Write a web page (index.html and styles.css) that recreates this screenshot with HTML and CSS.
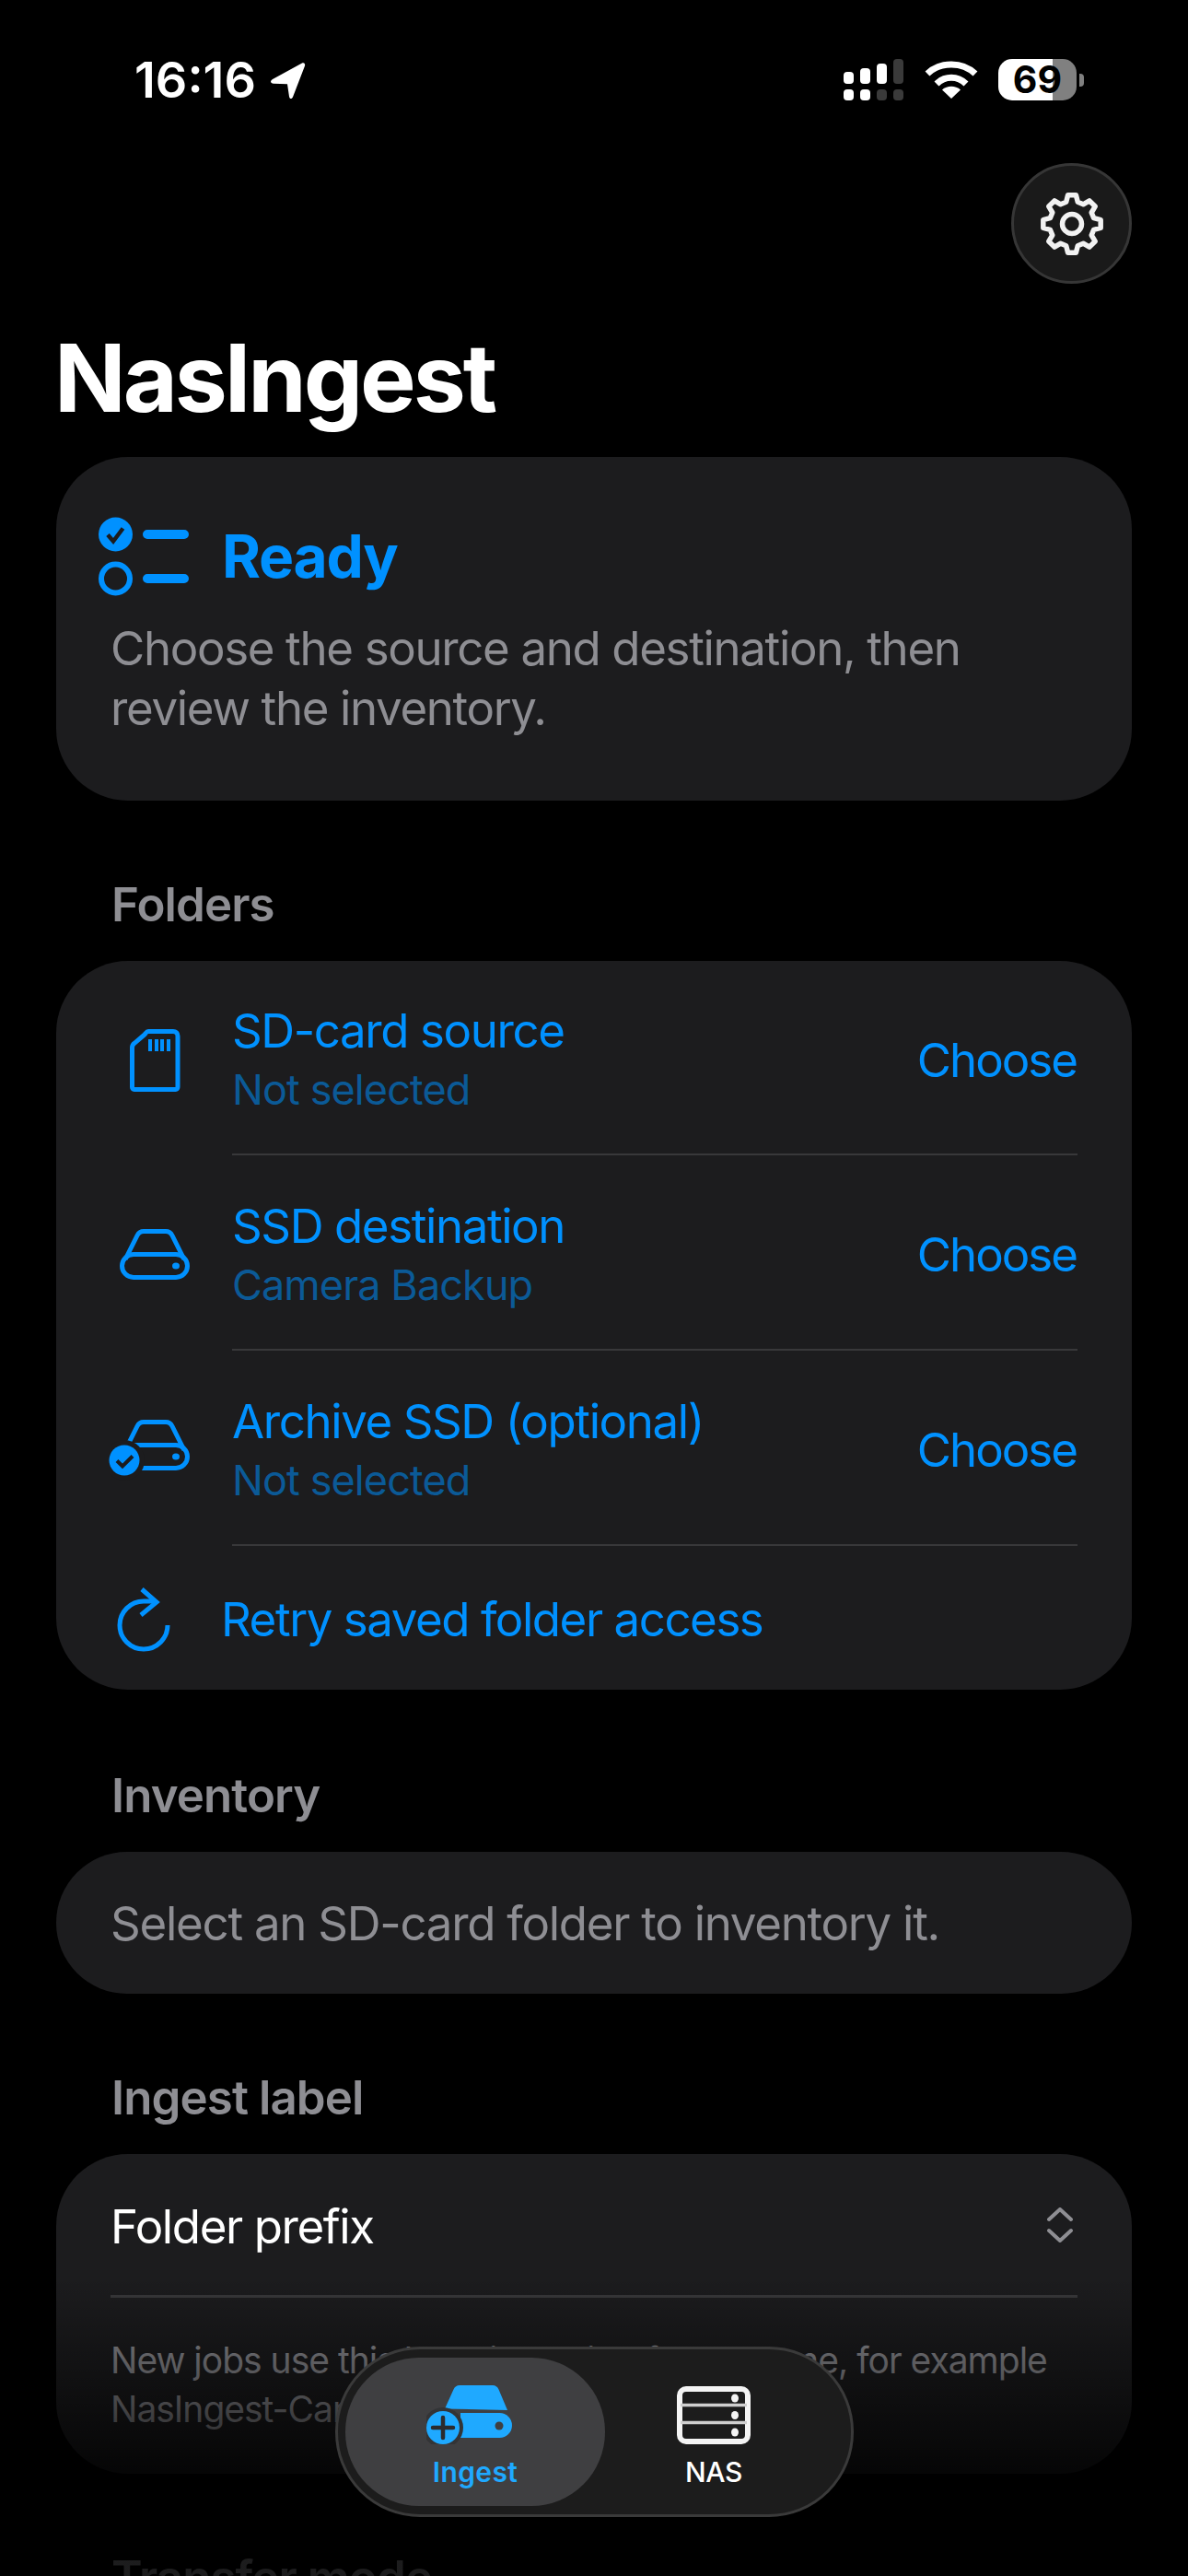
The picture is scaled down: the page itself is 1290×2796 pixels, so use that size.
FILE: index.html
```html
<!DOCTYPE html>
<html lang="en">
<head>
  <meta charset="UTF-8">
  <meta name="viewport" content="width=device-width, initial-scale=1">
  <title>NasIngest</title>
  <link rel="stylesheet" href="styles.css">
</head>
<body>
<div class="screen">

  <div class="status">
    <div class="status-left">
      <span class="clock">16:16</span>
      <svg class="loc" width="42" height="42" viewBox="0 0 42 42"><path d="M37 2.500 5 20c-3 1.700-2.500 4.500 1 4.700l15 .6 2 13.400c.5 3 3 3 4 .5L40 5.500c.8-2.300-1-4-3-3Z" fill="#fff"/></svg>
    </div>
    <div class="status-right">
      <svg width="65" height="45" viewBox="0 0 65 45">
        <rect x="0" y="14" width="11" height="13" rx="4" fill="#fff"/>
        <rect x="18" y="10" width="11" height="17" rx="4" fill="#fff"/>
        <rect x="36" y="5" width="11" height="22" rx="4" fill="#fff"/>
        <rect x="54" y="0" width="11" height="27" rx="4" fill="#3a3a3a"/>
        <rect x="0" y="33" width="11" height="12" rx="4" fill="#fff"/>
        <rect x="18" y="33" width="11" height="12" rx="4" fill="#fff"/>
        <rect x="36" y="33" width="11" height="12" rx="4" fill="#3a3a3a"/>
        <rect x="54" y="33" width="11" height="12" rx="4" fill="#3a3a3a"/>
      </svg>
      <svg class="wifi" width="58" height="43" viewBox="0 0 58 43" fill="none" stroke="#fff">
        <path d="M3 15C17 1.500 41 1.500 55 15" stroke-width="7"/>
        <path d="M13 26c9-9 23-9 32 0" stroke-width="7"/>
        <path d="M29 42 19 32.500c5.500-5 14.500-5 20 0Z" fill="#fff" stroke="none"/>
      </svg>
      <div class="battery"><div class="battery-cell">69</div><div class="battery-nub"></div></div>
    </div>
  </div>

  <div class="top-actions">
    <button class="gear-btn">
      <svg width="80" height="80" viewBox="0 0 80 80" fill="none" stroke="#f2f2f2" stroke-width="5.500" stroke-linejoin="round">
        <polygon points="63.67,33.66 71.19,35.62 71.19,44.38 63.67,46.34 61.22,52.25 65.16,58.96 58.96,65.16 52.25,61.22 46.34,63.67 44.38,71.19 35.62,71.19 33.66,63.67 27.75,61.22 21.04,65.16 14.84,58.96 18.78,52.25 16.33,46.34 8.81,44.38 8.81,35.62 16.33,33.66 18.78,27.75 14.84,21.04 21.04,14.84 27.75,18.78 33.66,16.33 35.62,8.81 44.38,8.81 46.34,16.33 52.25,18.78 58.96,14.84 65.16,21.04 61.22,27.75"/>
        <circle cx="40" cy="40" r="10.500"/>
      </svg>
    </button>
  </div>

  <h1 class="title">NasIngest</h1>

  <section class="card status-card">
    <div class="status-head">
      <svg width="98" height="86" viewBox="0 0 98 86">
        <circle cx="18.500" cy="19" r="18.500" fill="#0091ff"/>
        <path d="M10 19.500l6 7 10.500-14" fill="none" stroke="#1c1c1e" stroke-width="4.500"/>
        <circle cx="18.500" cy="67" r="15.500" fill="none" stroke="#0091ff" stroke-width="6"/>
        <path d="M53 19h40M53 67h40" stroke="#0091ff" stroke-width="10" stroke-linecap="round"/>
      </svg>
      <span class="status-title">Ready</span>
    </div>
    <p class="status-desc">Choose the source and destination, then review the inventory.</p>
  </section>

  <h2 class="section-label">Folders</h2>
  <section class="card folders">
    <div class="row">
      <svg class="row-icon" width="90" height="90" viewBox="0 0 90 90" fill="none" stroke="#0091ff" stroke-width="5">
        <path d="M25.500 33c0-2 .8-3.500 2.500-4.700l11-9.500c1-1 2.300-3.300 4-3.300h27c3 0 5 2 5 5v55c0 3-2 3-5 3H30.500c-3 0-5 0-5-3Z"/>
        <path d="M45 24v13M52 24v13M58 24v13M65 24v13" stroke-width="4"/>
      </svg>
      <div class="row-body">
        <div class="row-text">
          <div class="row-title">SD-card source</div>
          <div class="row-sub">Not selected</div>
        </div>
        <span class="choose">Choose</span>
      </div>
    </div>
    <div class="row">
      <svg class="row-icon" width="90" height="90" viewBox="0 0 90 90" fill="none" stroke="#0091ff" stroke-width="5">
        <rect x="14.500" y="46.500" width="71" height="25" rx="12.500"/>
        <path d="M18 52 31 26c1.500-3 3.500-4.500 7-4.500h24c3.500 0 5.500 1.500 7 4.500l13 26"/>
        <ellipse cx="73" cy="59" rx="4" ry="3.500" fill="#0091ff" stroke="none"/>
      </svg>
      <div class="row-body">
        <div class="row-text">
          <div class="row-title">SSD destination</div>
          <div class="row-sub">Camera Backup</div>
        </div>
        <span class="choose">Choose</span>
      </div>
    </div>
    <div class="row">
      <svg class="row-icon" width="90" height="90" viewBox="0 0 90 90" fill="none" stroke="#0091ff" stroke-width="5">
        <g transform="translate(0 -5)">
          <rect x="14.500" y="46.500" width="71" height="25" rx="12.500"/>
          <path d="M18 52 31 26c1.500-3 3.500-4.500 7-4.500h24c3.500 0 5.500 1.500 7 4.500l13 26"/>
          <ellipse cx="73" cy="59" rx="4" ry="3.500" fill="#0091ff" stroke="none"/>
        </g>
        <circle cx="17" cy="58" r="22" fill="#1c1c1e" stroke="none"/>
        <circle cx="17" cy="58" r="16.500" fill="#0091ff" stroke="none"/>
        <path d="M9 58.500l6 6 11-11" stroke="#1c1c1e" stroke-width="4"/>
      </svg>
      <div class="row-body">
        <div class="row-text">
          <div class="row-title">Archive SSD (optional)</div>
          <div class="row-sub">Not selected</div>
        </div>
        <span class="choose">Choose</span>
      </div>
    </div>
    <div class="retry-row">
      <svg class="retry-icon" width="90" height="90" viewBox="0 0 90 90" fill="none" stroke="#0091ff" stroke-width="5">
        <path d="M50 27H38A26 26 0 1 0 64 53"/>
        <path d="M36 14l16 14-17 14"/>
      </svg>
      <span class="retry-text">Retry saved folder access</span>
    </div>
  </section>

  <h2 class="section-label inventory-label">Inventory</h2>
  <section class="card inventory">Select an SD-card folder to inventory it.</section>

  <h2 class="section-label">Ingest label</h2>
  <section class="card ingest">
    <div class="picker-row">
      <span class="picker-name">Folder prefix</span>
      <svg width="28" height="38" viewBox="0 0 28 38" fill="none" stroke="#8e8e93" stroke-width="4" stroke-linecap="round" stroke-linejoin="round">
        <path d="M2 13 14 2l12 11M2 25l12 11 12-11"/>
      </svg>
    </div>
    <p class="help">New jobs use this label in the job folder name, for example NasIngest-Camera</p>
  </section>

  <h2 class="section-label">Transfer mode</h2>

  <div class="fade"></div>

  <nav class="tabbar">
    <div class="tab tab-active">
      <svg class="tab-icon" width="93" height="65" viewBox="0 0 93 65">
        <path d="M20 26.500 29.500 5.500c1.300-3 3.500-4.500 6.500-4.500h36c3 0 5.200 1.500 6.500 4.500L88 28Z" fill="#1fa9ff"/>
        <path d="M37 31h42.500a13.500 13.500 0 0 1 0 27H37Z" fill="#1fa9ff"/>
        <circle cx="79" cy="45" r="4.500" fill="#3f3f41"/>
        <circle cx="18" cy="47" r="22" fill="#333436"/>
        <circle cx="18" cy="47" r="18" fill="#1fa9ff"/>
        <path d="M18 36v22M7 47h22" stroke="#2b2b2d" stroke-width="4.500" stroke-linecap="round"/>
      </svg>
      <span class="tab-label">Ingest</span>
    </div>
    <div class="tab tab-plain">
      <svg width="80" height="63" viewBox="0 0 80 63" fill="none" stroke="#f4f4f4">
        <rect x="3" y="3" width="74" height="57" rx="7" stroke-width="6"/>
        <path d="M4 20.500h72M4 39.500h72" stroke="#cfcfcf" stroke-width="3.500"/>
        <ellipse cx="63" cy="13" rx="4" ry="4.500" fill="#f4f4f4" stroke="none"/>
        <ellipse cx="63" cy="31.500" rx="4" ry="4.500" fill="#f4f4f4" stroke="none"/>
        <ellipse cx="63" cy="50" rx="4" ry="4.500" fill="#f4f4f4" stroke="none"/>
      </svg>
      <span class="tab-label">NAS</span>
    </div>
  </nav>

</div>
</body>
</html>
```

FILE: styles.css
```css
* {
  box-sizing: border-box;
}

body {
  margin: 0;
  background: #000;
  color: #fff;
  font-family: "Inter", "Liberation Sans", sans-serif;
}

.screen {
  position: relative;
  height: 2796px;
  padding-top: 64px;
  overflow: hidden;
  background: #000;
}

/* status bar */
.status {
  display: flex;
  justify-content: space-between;
  align-items: center;
  height: 45px;
  padding: 0 113px 0 146px;
}

.status-left {
  display: flex;
  align-items: center;
  gap: 13px;
}

.clock {
  font-size: 54px;
  font-weight: 600;
  line-height: 45px;
}

.status-right {
  display: flex;
  align-items: center;
  gap: 23px;
}

.wifi {
  margin-right: -1px;
}

.battery {
  display: flex;
  align-items: center;
  gap: 3px;
}

.battery-cell {
  width: 85px;
  height: 45px;
  border-radius: 15px;
  background: linear-gradient(90deg, #fff 69%, #808080 69%);
  color: #000;
  font-size: 41px;
  font-weight: 700;
  line-height: 45px;
  text-align: center;
}

.battery-nub {
  width: 5px;
  height: 14px;
  border-radius: 0 4px 4px 0;
  background: #808080;
}

/* header */
.top-actions {
  display: flex;
  justify-content: flex-end;
  padding: 0 61px;
  margin-top: 68px;
}

.gear-btn {
  display: flex;
  align-items: center;
  justify-content: center;
  width: 131px;
  height: 131px;
  padding: 0;
  border: 3px solid #363636;
  border-radius: 50%;
  background: #1a1a1a;
}

.title {
  margin: 47px 59px 31px;
  font-size: 102px;
  font-weight: 700;
  line-height: 110px;
  letter-spacing: -3.100px;
}

/* cards */
.card {
  margin: 0 61px;
  background: #1c1c1e;
  border-radius: 78px;
}

.status-card {
  padding: 65px 46px 68px;
}

.status-head {
  display: flex;
  align-items: center;
  gap: 36px;
  margin-bottom: 24px;
}

.status-title {
  color: #0091ff;
  font-size: 64px;
  font-weight: 700;
  line-height: 76px;
  letter-spacing: -1.200px;
}

.status-desc {
  margin: 0;
  padding-left: 13px;
  color: #8e8e93;
  font-size: 51px;
  line-height: 65px;
  letter-spacing: -1.350px;
}

.section-label {
  margin: 83px 121px 31px;
  color: #8e8e93;
  font-size: 51px;
  font-weight: 600;
  line-height: 60px;
  letter-spacing: -0.900px;
}

.inventory-label {
  margin-top: 85px;
}

/* folder rows */
.row {
  display: flex;
  align-items: center;
  height: 212px;
}

.row:first-child {
  height: 211px;
}

.row-icon {
  flex: none;
  margin: 0 44px 0 57px;
}

.row-body {
  flex: 1;
  display: flex;
  align-items: center;
  justify-content: space-between;
  height: 100%;
  margin-right: 59px;
  padding: 5px 1px 0 0;
  border-bottom: 2px solid #38383a;
}

.row-title {
  color: #0091ff;
  font-size: 51px;
  line-height: 62px;
  letter-spacing: -1.400px;
}

.row-sub {
  margin-top: 4px;
  color: #0b5a97;
  font-size: 45px;
  line-height: 58px;
  letter-spacing: -0.900px;
}

.choose {
  color: #0091ff;
  font-size: 51px;
  letter-spacing: -2px;
}

.retry-row {
  display: flex;
  align-items: center;
  height: 156px;
}

.retry-icon {
  flex: none;
  margin: 0 32px 0 57px;
}

.retry-text {
  padding-top: 3px;
  color: #0091ff;
  font-size: 51px;
  line-height: 62px;
  letter-spacing: -1.450px;
}

.inventory {
  display: flex;
  align-items: center;
  height: 154px;
  padding: 0 59px;
  color: #8e8e93;
  font-size: 51px;
  letter-spacing: -1.260px;
}

/* ingest label */
.ingest {
  padding: 0 59px 44px;
}

.picker-row {
  display: flex;
  align-items: center;
  justify-content: space-between;
  height: 156px;
  padding-right: 5px;
  border-bottom: 3px solid #38383a;
}

.picker-name {
  padding-top: 4px;
  font-size: 51px;
  line-height: 62px;
  letter-spacing: -1.400px;
}

.help {
  margin: 41px 0 0;
  color: #8e8e93;
  font-size: 39px;
  line-height: 53px;
  letter-spacing: -1px;
}

/* overlays */
.fade {
  position: absolute;
  left: 0;
  right: 0;
  top: 2472px;
  bottom: 0;
  background: linear-gradient(180deg, rgba(0, 0, 0, 0) 0, rgba(0, 0, 0, 0.8) 212px, rgba(0, 0, 0, 0.8) 100%);
}

.tabbar {
  position: absolute;
  left: 364px;
  top: 2547px;
  display: flex;
  align-items: center;
  width: 563px;
  height: 185px;
  padding: 0 8px;
  border: 3px solid #3a3a3a;
  border-radius: 92px;
  background: #1c1c1c;
}

.tab {
  flex: none;
  display: flex;
  flex-direction: column;
  align-items: center;
  justify-content: flex-end;
  width: 282px;
  height: 161px;
  padding-bottom: 19px;
  gap: 12px;
  color: #fff;
}

.tab-plain {
  width: 236px;
}

.tab-active {
  border-radius: 80px;
  background: #3f3f41;
  color: #1fa9ff;
}

.tab-icon {
  margin-right: 13px;
}

.tab-label {
  font-size: 30px;
  font-weight: 500;
  line-height: 36px;
  letter-spacing: -0.400px;
}

.tab-active .tab-label {
  font-weight: 600;
  letter-spacing: 0.400px;
}
```
